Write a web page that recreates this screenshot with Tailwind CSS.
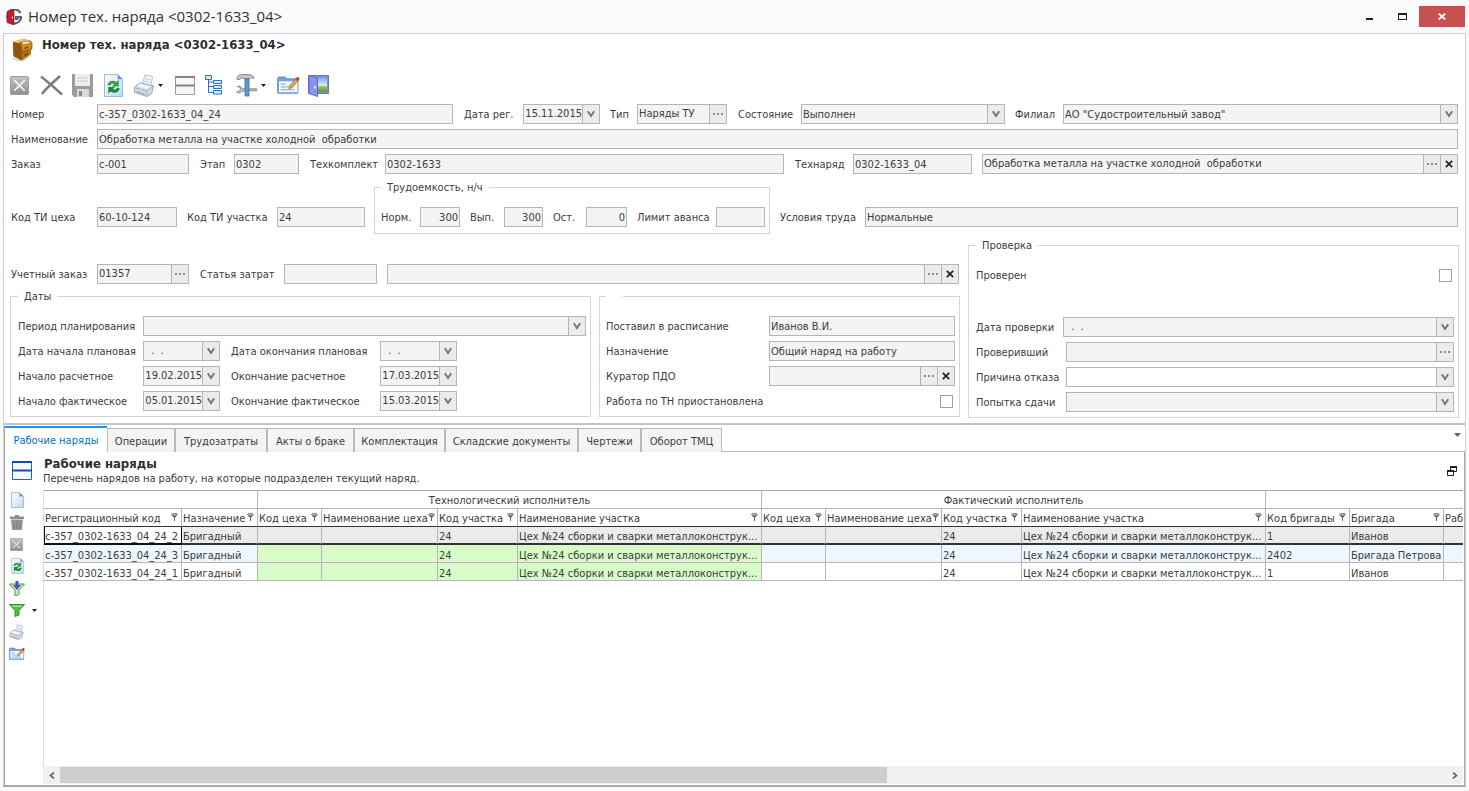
<!DOCTYPE html>
<html lang="ru">

<head>
    <meta charset="UTF-8">
    <meta name="viewport" content="width=device-width, initial-scale=1.0">
    <title>Номер тех. наряда &lt;0302-1633_04&gt;</title>
    <script src="https://cdn.jsdelivr.net/npm/@tailwindcss/browser@4"></script>
</head>

<body class="flex min-h-screen flex-col bg-[#fafafa] px-[3px] pb-1 font-['DejaVu_Sans_Condensed','DejaVu_Sans',sans-serif] text-[11px] leading-4 text-[#3c3c3c]">

    <!-- shared icons -->
    <svg class="absolute h-0 w-0" xmlns="http://www.w3.org/2000/svg">
        <defs>
            <linearGradient id="g-page" x1="0" y1="0" x2="1" y2="1">
                <stop offset="0" stop-color="#ffffff" />
                <stop offset="1" stop-color="#bcd9f3" />
            </linearGradient>
            <linearGradient id="g-gray" x1="0" y1="0" x2="0" y2="1">
                <stop offset="0" stop-color="#c4c4c4" />
                <stop offset="1" stop-color="#8e8e8e" />
            </linearGradient>
            <linearGradient id="g-sky" x1="0" y1="0" x2="0" y2="1">
                <stop offset="0" stop-color="#7fb5ee" />
                <stop offset=".55" stop-color="#d8ecfb" />
                <stop offset=".6" stop-color="#9ccf5a" />
                <stop offset="1" stop-color="#5a9a2c" />
            </linearGradient>
        </defs>
        <symbol id="i-chev" viewBox="0 0 8 8"><path d="M.8 1.200 4 6l3.200-4.800" fill="none" stroke="#777" stroke-width="2" /></symbol>
        <symbol id="i-dots" viewBox="0 0 11 2"><path d="M0 0h2v2H0zM4 0h2v2H4zM8 0h2v2H8z" fill="#8c8c8c" /></symbol>
        <symbol id="i-x" viewBox="0 0 8 8"><path d="m.8.8 6.400 6.400M7.200.8.8 7.200" stroke="#222" stroke-width="1.700" /></symbol>
        <symbol id="i-caret" viewBox="0 0 5 3"><path d="M0 0h5L2.500 3z" fill="#222" /></symbol>
        <symbol id="i-boxx" viewBox="0 0 20 20">
            <rect x=".5" y=".5" width="19" height="19" rx="1.500" fill="url(#g-gray)" stroke="#999" />
            <path d="m4.500 4.500 11 11m0-11-11 11" stroke="#fff" stroke-width="1.500" />
        </symbol>
        <symbol id="i-refresh" viewBox="0 0 20 24">
            <path d="M.5.5h14l5 5v18H.5z" fill="url(#g-page)" stroke="#8fb6e2" />
            <path d="M14.500.5v5h5z" fill="#5e97d8" />
            <path d="M3.500 12c.5-5 6-6.500 9.500-3.700L15.500 6v7H8.200l2.400-2.300c-1.500-1-3.400-.5-4 1.300z" fill="#35a345" />
            <path d="M16.500 14.500c-.5 5-6 6.500-9.500 3.700L4.500 20.500v-7h7.300l-2.400 2.300c1.500 1 3.400.5 4-1.300z" fill="#238636" />
        </symbol>
        <symbol id="i-print" viewBox="0 0 22 24">
            <path d="m9 11 3-10 8 1.500-2 10z" fill="#eef4fa" stroke="#b4bfca" />
            <path d="m11.500 5 6 1m-6.500 1.500 6 1" stroke="#b9cde0" />
            <path d="M1 14 7 9l14 3.500-2 8-5 3L1 19z" fill="#d9dde1" stroke="#9fa6ad" />
            <path d="m1 14 13 4 7-5.500M14 18v5.500" fill="none" stroke="#a8b0b8" />
            <path d="m3 17.500 9 2.800v2L3 19.500z" fill="#9cb9d3" />
            <path d="m7 10.500 10 2.500-3 2.500L4 13z" fill="#f4f6f8" />
        </symbol>
        <symbol id="i-card" viewBox="0 0 24 20">
            <path d="M.5 17.500v-15l1-1.500h7l1.500 2h12v14.500z" fill="#6fa3dc" stroke="#6c95c8" />
            <path d="M2 5.500h19.500V17H2z" fill="#f4f9fe" />
            <path d="M.5 19v-2h21.500v2z" fill="#86b1e0" />
            <path d="M4 8.500h5m-5 3h10m-10 3h14" stroke="#6f9fd6" />
            <path d="m12.500 13.500 1-3.500 6.500-7.500 2.500 2-6.500 7.500z" fill="#eda545" stroke="#7d6b5c" stroke-width=".8" />
            <path d="m19 3.500 1.800-2.200c1-1 3.300.8 2.600 2L21.500 5.500z" fill="#d8352b" />
        </symbol>
        <symbol id="i-funnel" viewBox="0 0 16 14">
            <path d="M.5 1.500h15L10 7.500V12L6 13.500v-6z" fill="#55bd3c" stroke="#3c8f2a" />
            <path d="M2.500 2.500h11L12 4H4z" fill="#9be583" />
        </symbol>
        <symbol id="i-filter" viewBox="0 0 7 8">
            <ellipse cx="3.500" cy="1.600" rx="3" ry="1.200" fill="#bbb" stroke="#666" stroke-width=".8" />
            <path d="M.8 2.400 3 4.800V8h1V4.800l2.200-2.400z" fill="#666" />
        </symbol>
    </svg>

    <!-- title bar -->
    <header class="flex h-[33px] shrink-0 items-center">
        <svg class="ml-[3px] h-4 w-4" viewBox="0 0 16 16">
            <path d="M14.500 4A7 7 0 1 0 15 9.500V8h-5v2h2.500" fill="none" stroke="#5c6470" stroke-width="2.200" />
            <path d="M1 2.500 8 0v16l-7-2.500z" fill="#c01f2e" stroke="#7a1420" stroke-width=".6" />
            <path d="M6.500 7.500v2" stroke="#fff" />
        </svg>
        <h1 class="ml-[6px] pb-[2px] font-['Open_Sans','Noto_Sans',sans-serif] text-[15px] leading-5 text-[#333]">Номер тех. наряда &lt;0302-1633_04&gt;</h1>
        <div class="ml-auto flex h-[21px]">
            <button type="button" aria-label="Свернуть" class="flex w-[33px] items-end justify-center pb-[7px]"><span class="h-[2px] w-[7px] bg-[#222]"></span></button>
            <button type="button" aria-label="Развернуть" class="flex w-[33px] items-center justify-center"><span class="h-[7px] w-[9px] border border-t-2 border-[#222]"></span></button>
            <button type="button" aria-label="Закрыть" class="mr-px flex w-[46px] items-center justify-center bg-[#c75050]">
                <svg class="h-[7px] w-[8px]" viewBox="0 0 8 7"><path d="M.7.5l6.600 6M7.300.5.7 6.500" stroke="#fff" stroke-width="1.700" /></svg>
            </button>
        </div>
    </header>

    <main class="flex flex-1 flex-col border border-b-2 border-[#cfcfcf] border-b-[#a8a8a8] bg-white">

        <form class="flex flex-col border-b-2 border-[#c3c3c3] px-[6px] pb-[5px]">
            <div class="flex h-8 items-start gap-[9px]">
                <svg class="mt-1 h-6 w-[23px]" viewBox="0 0 23 24">
                    <path d="M2 20c3 3 8 4 12 3l8-6-3-3z" fill="#d8d8d8" />
                    <path d="M3 4 13 .8l7.500 2L21 16l-9 6.500L3.500 18z" fill="#b0731c" />
                    <path d="M3 4 13 .8l7.500 2L11.500 6z" fill="#f0c062" />
                    <path d="M3 4l8.500 2 .5 16.500L3.500 18z" fill="#8d5610" />
                    <path d="m10 4.500 10-1.500 2 1.500v6.500l-9.500 3z" fill="#c98a26" stroke="#7b4a0c" stroke-width=".7" />
                    <path d="m12 4.500 6.500-1.200 1.500 1.500-6.500 1.500z" fill="#eee" />
                    <path d="M14.500 10.500 18 9.400M14.500 17.500l3.500-2" stroke="#5a3506" stroke-width="1.200" />
                </svg>
                <h2 class="mt-[3px] text-[13px] leading-4 font-bold text-[#2f2f2f]">Номер тех. наряда &lt;0302-1633_04&gt;</h2>
            </div>

            <!-- toolbar -->
            <div class="flex h-[38px] items-center">
                <button type="button" aria-label="Отмена" class="w-[30px]"><svg class="h-[19px] w-[19px]"><use href="#i-boxx" /></svg></button>
                <button type="button" aria-label="Удалить" class="w-8">
                    <svg class="h-[22px] w-[23px]" viewBox="0 0 23 22"><path d="M1 2.500C8 8 15 14 22 20.500M20 2C14 8 7 13 2 20" fill="none" stroke="#7d7d7d" stroke-width="2.500" /></svg>
                </button>
                <button type="button" aria-label="Сохранить" class="w-8">
                    <svg class="h-[23px] w-[21px]" viewBox="0 0 21 23">
                        <path d="M0 0h21v23H2l-2-2z" fill="#9b9b9b" />
                        <path d="M3 0h15v12H3z" fill="#eee" />
                        <path d="M5 4h11M5 7h11" stroke="#ccc" />
                        <path d="M5 15h12v8H5z" fill="#d9d9d9" />
                        <path d="M7 17h3v5H7z" fill="#888" />
                    </svg>
                </button>
                <button type="button" aria-label="Обновить" class="w-[29px]"><svg class="h-[23px] w-[19px]"><use href="#i-refresh" /></svg></button>
                <button type="button" aria-label="Печать" class="flex w-[42px] items-center gap-[3px]">
                    <svg class="h-[23px] w-[22px]"><use href="#i-print" /></svg>
                    <svg class="h-[3px] w-[5px]"><use href="#i-caret" /></svg>
                </button>
                <button type="button" aria-label="Список" class="w-[30px]">
                    <svg class="h-[19px] w-[20px]" viewBox="0 0 20 19">
                        <path d="M.5.5h19v18H.5z" fill="#f6f6f6" stroke="#9c9c9c" />
                        <path d="M0 1h20M0 9.500h20" stroke="#858585" stroke-width="2" />
                    </svg>
                </button>
                <button type="button" aria-label="Структура" class="w-[31px]">
                    <svg class="h-[20px] w-[17px]" viewBox="0 0 17 20">
                        <path d="M3.500 5v12.500H9M3.500 11.500H9M3.500 7H9" fill="none" stroke="#2a6fc9" />
                        <path d="M.5.5h6v4h-6zM8.500 5.500h8v3h-8zM8.500 10.500h8v3h-8zM8.500 15.500h8v3.500h-8z" fill="#d9ebfb" stroke="#2a6fc9" />
                    </svg>
                </button>
                <button type="button" aria-label="Инструменты" class="flex w-[41px] items-center gap-[3px]">
                    <svg class="h-[23px] w-[22px]" viewBox="0 0 22 23">
                        <path d="M1 4c0-2 2-3.500 5-3.500h7c3 0 5 1.500 5 4l-2-.8-3 .8H7L5 3.500 4 5.500H1z" fill="#c3c6c9" stroke="#777c82" stroke-width=".8" />
                        <path d="M9 5h4v17H9z" fill="#5b9bd3" stroke="#356f9f" stroke-width=".8" />
                        <path d="M1 12.500l3 .8.500 2-1.500 2L.5 18c2 2 4.500 1 5.500-.8h2.500v-2.500H6C5 12.500 3 11.500 1 12.500zM13.500 14.800h7v2h-7z" fill="#c3c6c9" stroke="#777c82" stroke-width=".8" />
                    </svg>
                    <svg class="h-[3px] w-[5px]"><use href="#i-caret" /></svg>
                </button>
                <button type="button" aria-label="Редактировать" class="w-[31px]"><svg class="h-[19px] w-[23px]"><use href="#i-card" /></svg></button>
                <button type="button" aria-label="Выход">
                    <svg class="h-[23px] w-[21px]" viewBox="0 0 21 23">
                        <path d="M.5 1.500h20v18H.5z" fill="#8390dc" stroke="#6a72c4" />
                        <path d="M9 4h10v14H9z" fill="url(#g-sky)" />
                        <path d="M1 1.500 9.500 4v18.500L1 19.500z" fill="#8795ea" stroke="#5f66bd" />
                        <path d="M7 12v2.500" stroke="#fff" stroke-width="1.500" />
                    </svg>
                </button>
            </div>

            <div class="flex flex-col gap-[5px] px-px">
                <div class="flex h-5 items-center">
                    <label for="number" class="w-[86px] pt-[2px]">Номер</label>
                    <input id="number" readonly value="с-357_0302-1633_04_24" class="h-5 w-[356px] border border-[#b5b5b5] bg-[#f4f4f4] px-px outline-none">
                    <label for="regDate" class="w-[70px] pt-[2px] pl-[11px]">Дата рег.</label>
                    <div class="flex h-5 w-[77px] border border-[#b5b5b5] bg-[#f4f4f4]">
                        <input id="regDate" readonly value="15.11.2015" class="min-w-0 flex-1 text-right outline-none">
                        <button type="button" aria-label="Выбрать" class="flex w-[17px] items-center justify-center border-l border-[#b5b5b5] bg-[#ebebeb]"><svg class="h-2 w-2"><use href="#i-chev" /></svg></button>
                    </div>
                    <label for="type" class="w-[37px] pt-[2px] pl-[10px]">Тип</label>
                    <div class="flex h-5 w-[90px] border border-[#b5b5b5] bg-[#f4f4f4]">
                        <input id="type" readonly value="Наряды ТУ" class="min-w-0 flex-1 px-px outline-none">
                        <button type="button" aria-label="Выбрать" class="flex w-[17px] items-center justify-center border-l border-[#b5b5b5] bg-[#ebebeb]"><svg class="h-[2px] w-[11px]"><use href="#i-dots" /></svg></button>
                    </div>
                    <label for="state" class="w-[74px] pt-[2px] pl-[11px]">Состояние</label>
                    <div class="flex h-5 w-[204px] border border-[#b5b5b5] bg-[#f4f4f4]">
                        <select id="state" class="min-w-0 flex-1 appearance-none px-px pt-px outline-none"><option>Выполнен</option></select>
                        <span class="flex w-[17px] items-center justify-center border-l border-[#b5b5b5] bg-[#ebebeb]"><svg class="h-2 w-2"><use href="#i-chev" /></svg></span>
                    </div>
                    <label for="branch" class="w-[58px] pt-[2px] pl-[10px]">Филиал</label>
                    <div class="flex h-5 flex-1 border border-[#b5b5b5] bg-[#f4f4f4]">
                        <select id="branch" class="min-w-0 flex-1 appearance-none px-px pt-px outline-none"><option>АО "Судостроительный завод"</option></select>
                        <span class="flex w-[17px] items-center justify-center border-l border-[#b5b5b5] bg-[#ebebeb]"><svg class="h-2 w-2"><use href="#i-chev" /></svg></span>
                    </div>
                </div>

                <div class="flex h-5 items-center">
                    <label for="name" class="w-[86px] pt-[2px]">Наименование</label>
                    <input id="name" readonly value="Обработка металла на участке холодной  обработки" class="h-5 min-w-0 flex-1 border border-[#b5b5b5] bg-[#f4f4f4] px-px outline-none">
                </div>

                <div class="flex h-5 items-center">
                    <label for="order" class="w-[86px] pt-[2px]">Заказ</label>
                    <input id="order" readonly value="с-001" class="h-5 w-[92px] border border-[#b5b5b5] bg-[#f4f4f4] px-px outline-none">
                    <label for="stage" class="w-[45px] pt-[2px] pl-[11px]">Этап</label>
                    <input id="stage" readonly value="0302" class="h-5 w-[65px] border border-[#b5b5b5] bg-[#f4f4f4] px-px outline-none">
                    <label for="kit" class="w-[86px] pt-[2px] pl-[11px]">Техкомплект</label>
                    <input id="kit" readonly value="0302-1633" class="h-5 w-[399px] border border-[#b5b5b5] bg-[#f4f4f4] px-px outline-none">
                    <label for="techOrder" class="w-[69px] pt-[2px] pl-[11px]">Технаряд</label>
                    <input id="techOrder" readonly value="0302-1633_04" class="mr-[10px] h-5 w-[119px] border border-[#b5b5b5] bg-[#f4f4f4] px-px outline-none">
                    <div class="flex h-5 flex-1 border border-[#b5b5b5] bg-[#f4f4f4]">
                        <input aria-label="Наименование технаряда" readonly value="Обработка металла на участке холодной  обработки" class="min-w-0 flex-1 px-px outline-none">
                        <button type="button" aria-label="Выбрать" class="flex w-[17px] items-center justify-center border-l border-[#b5b5b5] bg-[#ebebeb]"><svg class="h-[2px] w-[11px]"><use href="#i-dots" /></svg></button>
                        <button type="button" aria-label="Очистить" class="flex w-[17px] items-center justify-center border-l border-[#b5b5b5] bg-[#ebebeb]"><svg class="h-2 w-2"><use href="#i-x" /></svg></button>
                    </div>
                </div>

                <div class="flex items-end">
                    <div class="mb-[7px] flex h-5 items-center">
                        <label for="shopCode" class="w-[86px] pt-[2px]">Код ТИ цеха</label>
                        <input id="shopCode" readonly value="60-10-124" class="h-5 w-[80px] border border-[#b5b5b5] bg-[#f4f4f4] px-px outline-none">
                        <label for="areaCode" class="w-[100px] pt-[2px] pl-[10px]">Код ТИ участка</label>
                        <input id="areaCode" readonly value="24" class="h-5 w-[88px] border border-[#b5b5b5] bg-[#f4f4f4] px-px outline-none">
                    </div>
                    <fieldset class="ml-[9px] flex w-[396px] items-center border border-[#d4d4d4] pt-[11px] pb-[6px] pl-[6px]">
                        <legend class="px-[6px] leading-[17px]">Трудоемкость, н/ч</legend>
                        <label for="norm" class="w-[39px] pt-[2px]">Норм.</label>
                        <input id="norm" readonly value="300" class="h-5 w-[40px] border border-[#b5b5b5] bg-[#f4f4f4] px-px text-right outline-none">
                        <label for="done" class="w-[44px] pt-[2px] pl-[10px]">Вып.</label>
                        <input id="done" readonly value="300" class="h-5 w-[39px] border border-[#b5b5b5] bg-[#f4f4f4] px-px text-right outline-none">
                        <label for="rest" class="w-[43px] pt-[2px] pl-[10px]">Ост.</label>
                        <input id="rest" readonly value="0" class="h-5 w-[41px] border border-[#b5b5b5] bg-[#f4f4f4] px-px text-right outline-none">
                        <label for="limit" class="w-[89px] pt-[2px] pl-[10px] whitespace-nowrap">Лимит аванса</label>
                        <input id="limit" readonly class="h-5 w-[49px] border border-[#b5b5b5] bg-[#f4f4f4] px-px outline-none">
                    </fieldset>
                    <div class="mb-[7px] flex h-5 flex-1 items-center">
                        <label for="conditions" class="w-[95px] pt-[2px] pl-[10px]">Условия труда</label>
                        <input id="conditions" readonly value="Нормальные" class="h-5 min-w-0 flex-1 border border-[#b5b5b5] bg-[#f4f4f4] px-px outline-none">
                    </div>
                </div>
            </div>

            <div class="mt-[3px] grid grid-cols-[950fr_491fr] gap-2">
                <div>
                    <div class="mt-[27px] flex h-5 items-center px-px">
                        <label for="account" class="w-[86px] pt-[2px]">Учетный заказ</label>
                        <div class="flex h-5 w-[92px] border border-[#b5b5b5] bg-[#f4f4f4]">
                            <input id="account" readonly value="01357" class="min-w-0 flex-1 px-px outline-none">
                            <button type="button" aria-label="Выбрать" class="flex w-[17px] items-center justify-center border-l border-[#b5b5b5] bg-[#ebebeb]"><svg class="h-[2px] w-[11px]"><use href="#i-dots" /></svg></button>
                        </div>
                        <label for="cost" class="w-[95px] pt-[2px] pl-[11px]">Статья затрат</label>
                        <input id="cost" readonly class="mr-[10px] h-5 w-[93px] border border-[#b5b5b5] bg-[#f4f4f4] px-px outline-none">
                        <div class="flex h-5 flex-1 border border-[#b5b5b5] bg-[#f4f4f4]">
                            <input aria-label="Наименование статьи затрат" readonly class="min-w-0 flex-1 px-px outline-none">
                            <button type="button" aria-label="Выбрать" class="flex w-[17px] items-center justify-center border-l border-[#b5b5b5] bg-[#ebebeb]"><svg class="h-[2px] w-[11px]"><use href="#i-dots" /></svg></button>
                            <button type="button" aria-label="Очистить" class="flex w-[17px] items-center justify-center border-l border-[#b5b5b5] bg-[#ebebeb]"><svg class="h-2 w-2"><use href="#i-x" /></svg></button>
                        </div>
                    </div>

                    <div class="mt-1 grid grid-cols-[581fr_361fr] gap-2">
                        <fieldset class="flex min-w-0 flex-col gap-[5px] border border-[#d4d4d4] pt-[11px] pr-1 pb-[5px] pl-[7px]">
                            <legend class="px-[6px] leading-[17px]">Даты</legend>
                            <div class="flex h-5 items-center">
                                <label for="period" class="w-[125px] pt-[2px]">Период планирования</label>
                                <div class="flex h-5 flex-1 border border-[#b5b5b5] bg-[#f4f4f4]">
                                    <select id="period" class="min-w-0 flex-1 appearance-none px-px outline-none"><option></option></select>
                                    <span class="flex w-[17px] items-center justify-center border-l border-[#b5b5b5] bg-[#ebebeb]"><svg class="h-2 w-2"><use href="#i-chev" /></svg></span>
                                </div>
                            </div>
                            <div class="flex h-5 items-center">
                                <label for="startPlan" class="w-[125px] pt-[2px] whitespace-nowrap">Дата начала плановая</label>
                                <div class="flex h-5 w-[77px] border border-[#b5b5b5] bg-[#f4f4f4]">
                                    <input id="startPlan" readonly value=" .  ." class="min-w-0 flex-1 px-1 outline-none">
                                    <button type="button" aria-label="Выбрать" class="flex w-[17px] items-center justify-center border-l border-[#b5b5b5] bg-[#ebebeb]"><svg class="h-2 w-2"><use href="#i-chev" /></svg></button>
                                </div>
                                <label for="endPlan" class="w-[160px] pt-[2px] pl-[11px] whitespace-nowrap">Дата окончания плановая</label>
                                <div class="flex h-5 w-[77px] border border-[#b5b5b5] bg-[#f4f4f4]">
                                    <input id="endPlan" readonly value=" .  ." class="min-w-0 flex-1 px-1 outline-none">
                                    <button type="button" aria-label="Выбрать" class="flex w-[17px] items-center justify-center border-l border-[#b5b5b5] bg-[#ebebeb]"><svg class="h-2 w-2"><use href="#i-chev" /></svg></button>
                                </div>
                            </div>
                            <div class="flex h-5 items-center">
                                <label for="startCalc" class="w-[125px] pt-[2px]">Начало расчетное</label>
                                <div class="flex h-5 w-[77px] border border-[#b5b5b5] bg-[#f4f4f4]">
                                    <input id="startCalc" readonly value="19.02.2015" class="min-w-0 flex-1 text-right outline-none">
                                    <button type="button" aria-label="Выбрать" class="flex w-[17px] items-center justify-center border-l border-[#b5b5b5] bg-[#ebebeb]"><svg class="h-2 w-2"><use href="#i-chev" /></svg></button>
                                </div>
                                <label for="endCalc" class="w-[160px] pt-[2px] pl-[11px]">Окончание расчетное</label>
                                <div class="flex h-5 w-[77px] border border-[#b5b5b5] bg-[#f4f4f4]">
                                    <input id="endCalc" readonly value="17.03.2015" class="min-w-0 flex-1 text-right outline-none">
                                    <button type="button" aria-label="Выбрать" class="flex w-[17px] items-center justify-center border-l border-[#b5b5b5] bg-[#ebebeb]"><svg class="h-2 w-2"><use href="#i-chev" /></svg></button>
                                </div>
                            </div>
                            <div class="flex h-5 items-center">
                                <label for="startFact" class="w-[125px] pt-[2px]">Начало фактическое</label>
                                <div class="flex h-5 w-[77px] border border-[#b5b5b5] bg-[#f4f4f4]">
                                    <input id="startFact" readonly value="05.01.2015" class="min-w-0 flex-1 text-right outline-none">
                                    <button type="button" aria-label="Выбрать" class="flex w-[17px] items-center justify-center border-l border-[#b5b5b5] bg-[#ebebeb]"><svg class="h-2 w-2"><use href="#i-chev" /></svg></button>
                                </div>
                                <label for="endFact" class="w-[160px] pt-[2px] pl-[11px]">Окончание фактическое</label>
                                <div class="flex h-5 w-[77px] border border-[#b5b5b5] bg-[#f4f4f4]">
                                    <input id="endFact" readonly value="15.03.2015" class="min-w-0 flex-1 text-right outline-none">
                                    <button type="button" aria-label="Выбрать" class="flex w-[17px] items-center justify-center border-l border-[#b5b5b5] bg-[#ebebeb]"><svg class="h-2 w-2"><use href="#i-chev" /></svg></button>
                                </div>
                            </div>
                        </fieldset>

                        <fieldset class="flex min-w-0 flex-col gap-[5px] border border-[#d4d4d4] pt-[11px] pr-1 pb-[5px] pl-[6px]">
                            <legend class="h-[17px] w-[17px]"></legend>
                            <div class="flex h-5 items-center">
                                <label for="scheduledBy" class="w-[163px] pt-[2px]">Поставил в расписание</label>
                                <input id="scheduledBy" readonly value="Иванов В.И." class="h-5 min-w-0 flex-1 border border-[#b5b5b5] bg-[#f4f4f4] px-px outline-none">
                            </div>
                            <div class="flex h-5 items-center">
                                <label for="purpose" class="w-[163px] pt-[2px]">Назначение</label>
                                <input id="purpose" readonly value="Общий наряд на работу" class="h-5 min-w-0 flex-1 border border-[#b5b5b5] bg-[#f4f4f4] px-px outline-none">
                            </div>
                            <div class="flex h-5 items-center">
                                <label for="curator" class="w-[163px] pt-[2px]">Куратор ПДО</label>
                                <div class="flex h-5 flex-1 border border-[#b5b5b5] bg-[#f4f4f4]">
                                    <input id="curator" readonly class="min-w-0 flex-1 px-px outline-none">
                                    <button type="button" aria-label="Выбрать" class="flex w-[17px] items-center justify-center border-l border-[#b5b5b5] bg-[#ebebeb]"><svg class="h-[2px] w-[11px]"><use href="#i-dots" /></svg></button>
                                    <button type="button" aria-label="Очистить" class="flex w-[17px] items-center justify-center border-l border-[#b5b5b5] bg-[#ebebeb]"><svg class="h-2 w-2"><use href="#i-x" /></svg></button>
                                </div>
                            </div>
                            <div class="flex h-5 items-center justify-between">
                                <label for="paused" class="pt-[2px]">Работа по ТН приостановлена</label>
                                <input id="paused" type="checkbox" class="mr-[2px] h-[13px] w-[13px] appearance-none border border-[#a0a0a0] bg-white">
                            </div>
                        </fieldset>
                    </div>
                </div>

                <fieldset class="flex min-w-0 flex-col gap-[5px] border border-[#d4d4d4] pt-[11px] pr-1 pb-[5px] pl-[7px]">
                    <legend class="px-[6px] leading-[17px]">Проверка</legend>
                    <div class="mb-[27px] flex h-5 items-center justify-between">
                        <label for="checked" class="pt-[2px]">Проверен</label>
                        <input id="checked" type="checkbox" class="mr-[2px] h-[13px] w-[13px] appearance-none border border-[#a0a0a0] bg-white">
                    </div>
                    <div class="flex h-5 items-center">
                        <label for="checkDate" class="w-[87px] pt-[2px]">Дата проверки</label>
                        <div class="flex h-5 flex-1 border border-[#b5b5b5] bg-[#f4f4f4]">
                            <input id="checkDate" readonly value=" .  ." class="min-w-0 flex-1 px-1 outline-none">
                            <button type="button" aria-label="Выбрать" class="flex w-[17px] items-center justify-center border-l border-[#b5b5b5] bg-[#ebebeb]"><svg class="h-2 w-2"><use href="#i-chev" /></svg></button>
                        </div>
                    </div>
                    <div class="flex h-5 items-center">
                        <label for="checkedBy" class="w-[90px] pt-[2px]">Проверивший</label>
                        <div class="flex h-5 flex-1 border border-[#b5b5b5] bg-[#f4f4f4]">
                            <input id="checkedBy" readonly class="min-w-0 flex-1 px-px outline-none">
                            <button type="button" aria-label="Выбрать" class="flex w-[17px] items-center justify-center border-l border-[#b5b5b5] bg-[#ebebeb]"><svg class="h-[2px] w-[11px]"><use href="#i-dots" /></svg></button>
                        </div>
                    </div>
                    <div class="flex h-5 items-center">
                        <label for="reason" class="w-[90px] pt-[2px]">Причина отказа</label>
                        <div class="flex h-5 flex-1 border border-[#b5b5b5] bg-white">
                            <select id="reason" class="min-w-0 flex-1 appearance-none px-px outline-none"><option></option></select>
                            <span class="flex w-[17px] items-center justify-center border-l border-[#b5b5b5] bg-[#ebebeb]"><svg class="h-2 w-2"><use href="#i-chev" /></svg></span>
                        </div>
                    </div>
                    <div class="flex h-5 items-center">
                        <label for="attempt" class="w-[90px] pt-[2px]">Попытка сдачи</label>
                        <div class="flex h-5 flex-1 border border-[#b5b5b5] bg-[#f4f4f4]">
                            <select id="attempt" class="min-w-0 flex-1 appearance-none px-px outline-none"><option></option></select>
                            <span class="flex w-[17px] items-center justify-center border-l border-[#b5b5b5] bg-[#ebebeb]"><svg class="h-2 w-2"><use href="#i-chev" /></svg></span>
                        </div>
                    </div>
                </fieldset>
            </div>
        </form>

        <!-- tabs -->
        <nav class="flex h-[27px] items-end">
            <a href="#" class="flex h-[26px] w-[103px] items-center justify-center border-t-2 border-l border-t-[#1c97ea] border-l-[#a8a8a8] pt-px text-[#0072c6]">Рабочие наряды</a>
            <a href="#" class="flex h-6 w-[69px] items-center justify-center border-t border-r-2 border-l border-[#b9b9b9] bg-[#f4f4f4] pt-[2px]">Операции</a>
            <a href="#" class="flex h-6 w-[92px] items-center justify-center border-t border-r-2 border-[#b9b9b9] bg-[#f4f4f4] pt-[2px]">Трудозатраты</a>
            <a href="#" class="flex h-6 w-[87px] items-center justify-center border-t border-r-2 border-[#b9b9b9] bg-[#f4f4f4] pt-[2px]">Акты о браке</a>
            <a href="#" class="flex h-6 w-[91px] items-center justify-center border-t border-r-2 border-[#b9b9b9] bg-[#f4f4f4] pt-[2px]">Комплектация</a>
            <a href="#" class="flex h-6 w-[133px] items-center justify-center border-t border-r-2 border-[#b9b9b9] bg-[#f4f4f4] pt-[2px]">Складские документы</a>
            <a href="#" class="flex h-6 w-[63px] items-center justify-center border-t border-r-2 border-[#b9b9b9] bg-[#f4f4f4] pt-[2px]">Чертежи</a>
            <a href="#" class="flex h-6 w-[80px] items-center justify-center border-t border-r border-[#b9b9b9] bg-[#f4f4f4] pt-[2px]">Оборот ТМЦ</a>
            <div class="flex h-full flex-1 items-start justify-end border-b border-[#b9b9b9] pt-2 pr-1">
                <button type="button" aria-label="Все вкладки" class="flex"><svg class="h-1 w-[7px]" viewBox="0 0 7 4"><path d="M0 0h7L3.500 4z" fill="#666" /></svg></button>
            </div>
        </nav>

        <section class="flex flex-1 border-x border-[#a8a8a8] pr-px pb-px">
            <!-- side toolbar -->
            <aside class="flex w-[38px] shrink-0 flex-col pl-1">
                <div class="flex h-[37px] items-center pl-[3px]">
                    <svg class="h-[19px] w-[20px]" viewBox="0 0 20 19">
                        <path d="M.5.5h19v18H.5z" fill="#f2f8fe" stroke="#1f62c0" />
                        <path d="M0 1h20M0 9.500h20" stroke="#0e4fae" stroke-width="2" />
                    </svg>
                </div>
                <button type="button" aria-label="Создать" class="flex h-[22px] items-center pl-[2px]">
                    <svg class="h-4 w-[13px]" viewBox="0 0 13 16"><path d="M.5.5h8l4 4v11H.5z" fill="url(#g-page)" stroke="#9fbfe4" /><path d="M8.500.5v4h4z" fill="#5e97d8" /></svg>
                </button>
                <button type="button" aria-label="Удалить" class="flex h-[22px] items-center pl-px">
                    <svg class="h-[15px] w-[14px]" viewBox="0 0 14 15"><path d="M5 0h4v1.500h5V4H0V1.500h5z" fill="#8d8d8d" /><path d="M1 4.500h12L12 15H2z" fill="#9a9a9a" /><path d="M4 5.500v8.500M7 5.500v8.500m3-8.500v8.500" stroke="#777" /></svg>
                </button>
                <button type="button" aria-label="Отмена" class="flex h-[22px] items-center pl-px"><svg class="h-[13px] w-[13px]"><use href="#i-boxx" /></svg></button>
                <button type="button" aria-label="Обновить" class="flex h-[22px] items-center pl-[2px]"><svg class="h-4 w-[13px]"><use href="#i-refresh" /></svg></button>
                <button type="button" aria-label="Быстрый фильтр" class="flex h-[22px] items-center">
                    <svg class="h-[15px] w-4" viewBox="0 0 16 15"><path d="M.5 3h15L10 9v4.500L6 15V9z" fill="#c9ecbf" stroke="#49a334" /><path d="M6.500 0h3v4H12L8 9 4 4h2.500z" fill="#4b55c4" /></svg>
                </button>
                <button type="button" aria-label="Фильтр" class="flex h-[22px] items-center gap-[7px]">
                    <svg class="h-[14px] w-4"><use href="#i-funnel" /></svg>
                    <svg class="h-[3px] w-[5px]"><use href="#i-caret" /></svg>
                </button>
                <button type="button" aria-label="Печать" class="flex h-[22px] items-center"><svg class="h-4 w-[15px]"><use href="#i-print" /></svg></button>
                <button type="button" aria-label="Редактировать" class="flex h-[22px] items-center"><svg class="h-[14px] w-4"><use href="#i-card" /></svg></button>
            </aside>

            <div class="flex min-w-0 flex-1 flex-col">
                <div class="flex h-[38px] items-start justify-between pt-1 pr-[6px]">
                    <div>
                        <h3 class="pl-px text-[13px] leading-4 font-bold text-[#2f2f2f]">Рабочие наряды</h3>
                        <p class="leading-[14px]">Перечень нарядов на работу, на которые подразделен текущий наряд.</p>
                    </div>
                    <button type="button" aria-label="Отделить" class="mt-[10px]">
                        <svg class="h-[10px] w-[10px]" viewBox="0 0 10 10"><path d="M3.500 4V1h6v4.500h-3M.5 5h6v4.500h-6z" fill="none" stroke="#222" /><path d="M3 1h7M0 5h7" stroke="#222" stroke-width="2" /></svg>
                    </button>
                </div>

                <!-- grid -->
                <div class="flex-1 overflow-hidden border-l border-[#dcdcdc]">
                    <table class="w-[1520px] table-fixed border-separate border-spacing-0 border-t border-[#a9a9a9] text-left whitespace-nowrap">
                        <colgroup>
                            <col class="w-[138px]"><col class="w-[76px]">
                            <col class="w-[64px]"><col class="w-[116px]"><col class="w-[80px]"><col class="w-[244px]">
                            <col class="w-[64px]"><col class="w-[116px]"><col class="w-[80px]"><col class="w-[244px]">
                            <col class="w-[84px]"><col class="w-[94px]"><col>
                        </colgroup>
                        <thead>
                            <tr>
                                <th colspan="2" class="h-[18px] border-r border-b border-[#b5b5b5] p-0"></th>
                                <th colspan="4" class="h-[18px] border-r border-b border-[#b5b5b5] p-0 text-center font-normal"><div class="h-[17px] leading-[19px]">Технологический исполнитель</div></th>
                                <th colspan="4" class="h-[18px] border-r border-b border-[#b5b5b5] p-0 text-center font-normal"><div class="h-[17px] leading-[19px]">Фактический исполнитель</div></th>
                                <th colspan="3" class="h-[18px] border-r border-b border-[#b5b5b5] p-0"></th>
                            </tr>
                            <tr id="js-columns"></tr>
                        </thead>
                        <tbody id="js-tbody"></tbody>
                    </table>
                </div>

                <div class="flex h-[18px] items-center bg-[#f0f0f0]">
                    <button type="button" aria-label="Влево" class="flex w-[17px] justify-center"><svg class="h-[7px] w-[6px]" viewBox="0 0 6 7"><path d="M5 .5 1.500 3.500 5 6.500" fill="none" stroke="#666" stroke-width="1.700" /></svg></button>
                    <div class="h-4 flex-1"><div class="h-4 w-[59.700%] bg-[#cdcdcd]"></div></div>
                    <button type="button" aria-label="Вправо" class="flex w-[17px] justify-center"><svg class="h-[7px] w-[6px]" viewBox="0 0 6 7"><path d="M1 .5 4.500 3.500 1 6.500" fill="none" stroke="#666" stroke-width="1.700" /></svg></button>
                </div>
            </div>
        </section>
    </main>
</body>
<script>
    (function () {
        "use strict"
        const grid = {
            columns: ["Регистрационный код", "Назначение", "Код цеха", "Наименование цеха", "Код участка", "Наименование участка",
                "Код цеха", "Наименование цеха", "Код участка", "Наименование участка", "Код бригады", "Бригада", "Раб"],

            area: "Цех №24 сборки и сварки металлоконструк...",

            rows: [
                { code: "с-357_0302-1633_04_24_2", brigadeCode: "1", brigade: "Иванов" },
                { code: "с-357_0302-1633_04_24_3", brigadeCode: "2402", brigade: "Бригада Петрова" },
                { code: "с-357_0302-1633_04_24_1", brigadeCode: "1", brigade: "Иванов" },
            ],

            //render column titles
            renderColumns: function () {
                let th = ``
                this.columns.forEach((title) => {
                    th += `<th class="h-[18px] border-r border-b border-r-[#b5b5b5] border-b-[#333] p-0 font-normal">
                        <div class="flex h-[17px] justify-between overflow-hidden pl-px pr-[3px] leading-[19px]"><span>${title}</span><svg class="mt-1 h-2 w-[7px] shrink-0"><use href="#i-filter" /></svg></div>
                    </th>`
                });
                document.getElementById("js-columns").innerHTML = th
            },

            //render rows
            renderRows: function () {
                let tr = ``
                this.rows.forEach((row, index) => {
                    const cells = [row.code, "Бригадный", "", "", "24", this.area, "", "", "24", this.area, row.brigadeCode, row.brigade, ""]
                    tr += `<tr>`
                    cells.forEach((cell, i) => {
                        let style = "border-b border-[#b5b5b5] bg-white pl-px"
                        if (index === 1) style = "border-b border-[#b5b5b5] bg-[#eef7ff] pl-px"
                        if (index > 0 && i > 1 && i < 6) style = "border-b border-[#b5b5b5] bg-[#d8fcc8] pl-px"
                        if (index === 0) style = "border-b-2 border-r-[#b5b5b5] border-b-[#333] bg-[#ebebeb] pl-px"
                        if (index === 0 && i === 0) style = "border-b-2 border-l border-[#111] bg-white"
                        tr += `<td class="h-[18px] overflow-hidden border-r py-0 pr-0 ${style}"><div class="h-4 overflow-hidden leading-[19px]">${cell}</div></td>`
                    });
                    tr += `</tr>`
                });
                document.getElementById("js-tbody").innerHTML = tr
            },

            //initialize functions
            init: function () {
                this.renderColumns()
                this.renderRows()
            }
        }
        grid.init();
    })()
</script>

</html>
